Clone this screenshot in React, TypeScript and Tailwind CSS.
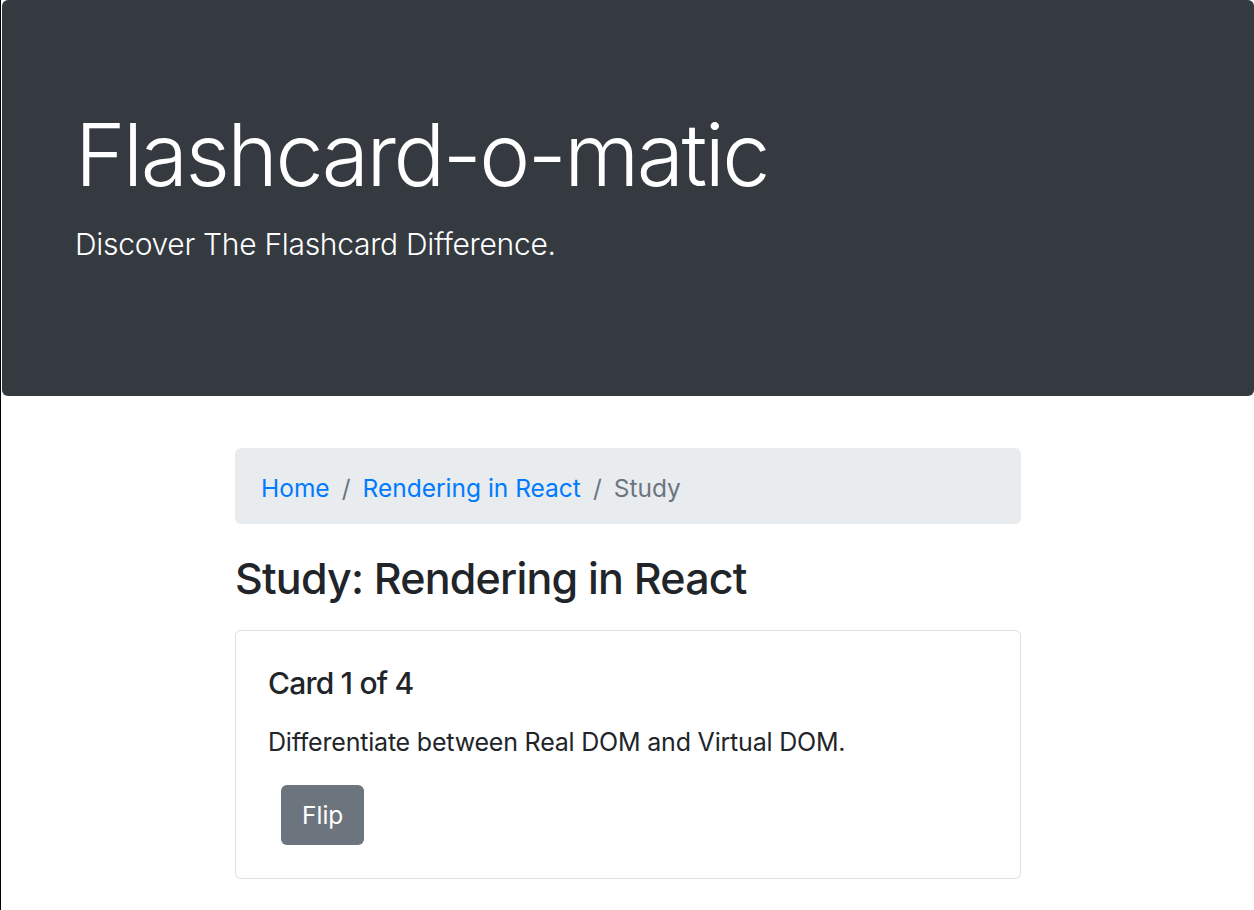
import React from "react";

export default function App() {
  return (
    <div
      className="min-h-[910px] border-l border-black bg-white pl-px"
      style={{ fontFamily: "Inter, 'Noto Sans', sans-serif" }}
    >
      <div className="h-[396px] w-[1252px] rounded-md bg-[#343a40] pl-[73px] pt-[103px] text-white">
        <h1 className="text-[86px] font-light leading-[104px] tracking-[-2.5px]">Flashcard-o-matic</h1>
        <p className="mt-[15px] text-[30px] font-light leading-[45px] tracking-[-0.3px]">
          Discover The Flashcard Difference.
        </p>
      </div>
      <div className="mx-auto w-[786px] pt-[52px] text-[#212529]">
        <nav className="flex h-[76px] items-center rounded-md bg-[#e9ecef] px-[26px] pt-[4px] text-[24.5px]">
          <a className="text-[#007bff]">Home</a>
          <span className="px-[12px] text-[#6c757d]">/</span>
          <a className="text-[#007bff]">Rendering in React</a>
          <span className="px-[12px] text-[#6c757d]">/</span>
          <span className="text-[#6c757d]">Study</span>
        </nav>
        <h2 className="mt-[28px] text-[43px] font-medium leading-[52px] tracking-[-0.8px]">
          Study: Rendering in React
        </h2>
        <div className="mt-[26px] rounded-md border border-[#dfdfdf] px-[32px] pb-[33px] pt-[34px]">
          <h5 className="text-[30px] font-medium leading-[36px] tracking-[-0.8px]">Card 1 of 4</h5>
          <p className="mt-[23px] text-[25px] leading-[36px] tracking-[-0.2px]">
            Differentiate between Real DOM and Virtual DOM.
          </p>
          <button className="ml-[13px] mt-[25px] h-[60px] rounded-md bg-[#6c757d] px-[21px] text-[24.5px] text-white">
            Flip
          </button>
        </div>
      </div>
    </div>
  );
}
